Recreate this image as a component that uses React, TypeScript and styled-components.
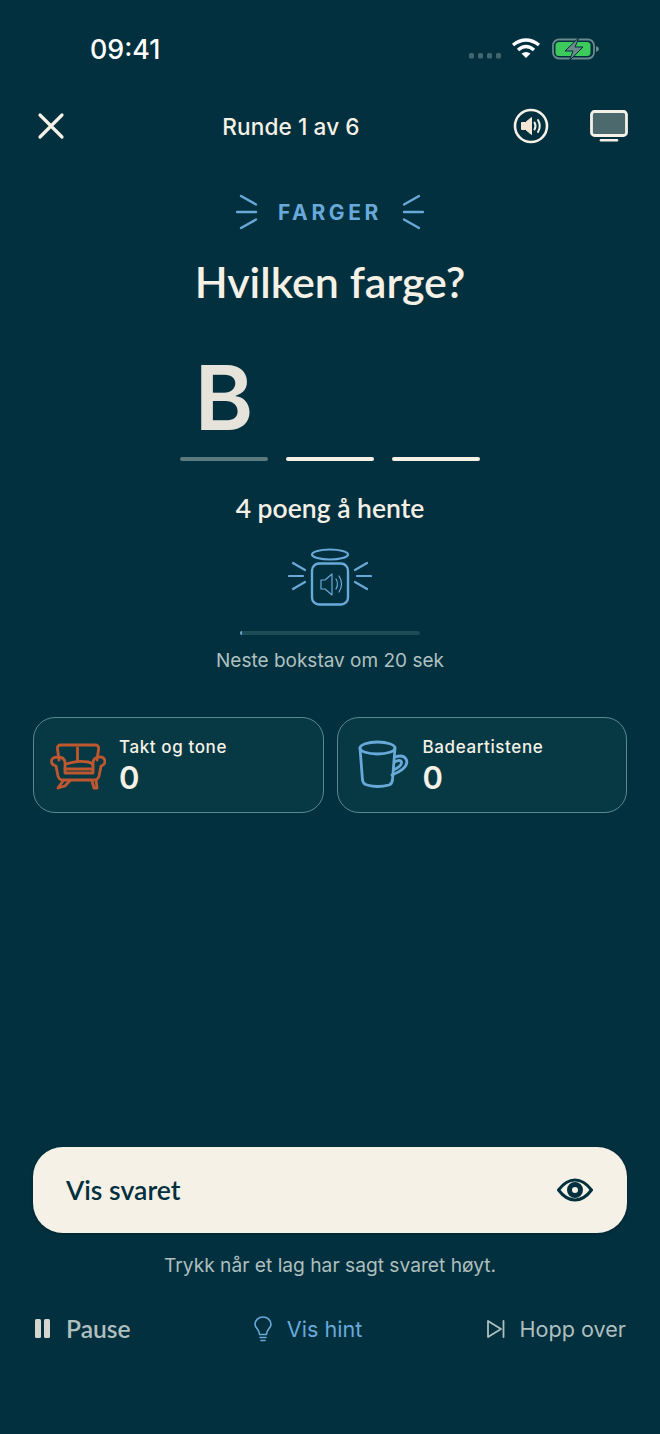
import React from 'react';
import styled, { createGlobalStyle } from 'styled-components';

const Global = createGlobalStyle`
  html, body { margin: 0; padding: 0; background: #02303e; }
  * { box-sizing: border-box; }
`;

const Screen = styled.div`
  width: 660px;
  height: 1434px;
  background: #02303e;
  color: #f5f1e6;
  font-family: Inter, "Liberation Sans", sans-serif;
  display: flex;
  flex-direction: column;
  overflow: hidden;
`;

const StatusBar = styled.div`
  height: 97px;
  padding: 31px 60px 0 90px;
  display: flex;
  justify-content: space-between;
  align-items: flex-start;
`;

const Time = styled.span`
  font-size: 26.8px;
  line-height: 36px;
  font-weight: 500;
  color: #fff;
`;

const StatusIcons = styled.div`
  display: flex;
  align-items: center;
  height: 36px;
  gap: 10px;
`;

const TopBar = styled.div`
  height: 58px;
  padding: 0 32px 0 37px;
  display: flex;
  align-items: center;
`;

const RoundLabel = styled.div`
  margin-left: 148px;
  width: 156px;
  text-align: center;
  font-size: 22.6px;
  font-weight: 500;
  letter-spacing: 0.1px;
`;

const TopActions = styled.div`
  margin-left: auto;
  display: flex;
  align-items: center;
  gap: 41px;
`;

const Center = styled.div`
  display: flex;
  flex-direction: column;
  align-items: center;
`;

const Category = styled.div`
  margin-top: 39px;
  height: 36px;
  display: flex;
  align-items: center;
  gap: 20px;
`;

const CategoryName = styled.span`
  font-size: 21px;
  font-weight: 700;
  letter-spacing: 3.6px;
  color: #69a9da;
  font-family: Inter, sans-serif;
`;

const Question = styled.h1`
  margin: 26px 0 0;
  font-family: Lato, sans-serif;
  font-size: 43px;
  line-height: 52px;
  font-weight: 600;
  color: #f5f1e6;
`;

const Letters = styled.div`
  margin-top: 50px;
  display: flex;
  gap: 18px;
`;

const LetterSlot = styled.div`
  width: 88px;
  height: 103px;
  display: flex;
  flex-direction: column;
  justify-content: flex-end;
  align-items: center;
`;

const Letter = styled.span`
  font-family: Inter, sans-serif;
  font-size: 89px;
  line-height: 80px;
  font-weight: 600;
  color: #e6e3da;
  margin-bottom: 19px;
`;

const Dash = styled.div<{ $dim?: boolean }>`
  width: 88px;
  height: 4px;
  flex: none;
  border-radius: 2px;
  background: ${p => (p.$dim ? '#5b7a7d' : '#f5f1e6')};
`;

const Points = styled.div`
  margin-top: 31px;
  font-size: 26.5px;
  line-height: 32px;
  font-weight: 600;
  font-family: Lato, sans-serif;
  color: #f5f1e6;
`;

const SpeakerWrap = styled.div`
  margin-top: 24px;
  height: 60px;
  display: flex;
`;

const Progress = styled.div`
  margin-top: 23px;
  width: 180px;
  height: 4px;
  border-radius: 2px;
  background: #1f4b55;
  overflow: hidden;
`;

const ProgressFill = styled.div`
  height: 100%;
  background: #69a9da;
`;

const NextLetter = styled.div`
  margin-top: 13px;
  font-size: 19px;
  line-height: 26px;
  color: #afc0c0;
`;

const Teams = styled.div`
  margin-top: 43px;
  padding: 0 33px;
  display: grid;
  grid-template-columns: 1fr 1fr;
  gap: 13px;
`;

const TeamCard = styled.div`
  height: 96px;
  border: 1.5px solid #5a8a8f;
  border-radius: 22px;
  background: #073945;
  display: flex;
  align-items: center;
  padding-left: 16px;
  gap: 13px;
`;

const TeamIcon = styled.div`
  width: 56px;
  height: 56px;
  flex: none;
`;

const TeamText = styled.div`
  display: flex;
  flex-direction: column;
`;

const TeamName = styled.span`
  font-size: 17px;
  line-height: 24px;
  font-weight: 500;
  letter-spacing: 0.6px;
  color: #f5f1e6;
`;

const TeamScore = styled.span`
  margin-top: 1px;
  font-size: 31px;
  line-height: 36px;
  font-weight: 600;
  color: #f5f1e6;
`;

const Spacer = styled.div`
  flex: 1;
`;

const RevealButton = styled.div`
  margin: 0 33px;
  height: 86px;
  border-radius: 30px;
  background: #f5f1e6;
  color: #02303e;
  display: flex;
  align-items: center;
  justify-content: space-between;
  padding: 0 34px 0 33px;
  font-size: 26.6px;
  font-weight: 600;
  font-family: Lato, sans-serif;
  box-shadow: 0 1px 3px rgba(0, 0, 0, 0.25);
`;

const Helper = styled.div`
  margin-top: 19px;
  text-align: center;
  font-size: 19.2px;
  line-height: 26px;
  color: #aebfbe;
`;

const BottomBar = styled.div`
  margin-top: 35px;
  margin-bottom: 89px;
  padding: 0 34px 0 34px;
  height: 32px;
  display: flex;
  justify-content: space-between;
  align-items: center;
`;

const BottomAction = styled.div<{ $accent?: boolean; $muted?: boolean }>`
  display: flex;
  align-items: center;
  gap: ${p => (p.$accent ? '15px' : p.$muted ? '14px' : '15px')};
  font-size: ${p => (p.$accent || p.$muted ? '21.6px' : '24.6px')};
  line-height: 30px;
  font-weight: ${p => (p.$accent || p.$muted ? 400 : 600)};
  color: ${p => (p.$accent ? '#69a9da' : '#aebfbe')};
  font-family: ${p => (p.$muted || p.$accent ? 'Inter' : 'Lato')}, sans-serif;
`;

const Rays = ({ flip }: { flip?: boolean }) => (
  <svg width="22" height="36" viewBox="0 0 22 36" fill="none" stroke="#69a9da" strokeWidth="2.4" strokeLinecap="round"
    style={flip ? { transform: 'scaleX(-1)' } : undefined}>
    <path d="M5 2 L20 10.5" />
    <path d="M1 18 L20 18" />
    <path d="M5 34 L20 25.5" />
  </svg>
);

const Speaker = () => (
  <svg width="84" height="60" viewBox="0 0 84 60" fill="none" stroke="#69a9da" strokeLinecap="round" strokeLinejoin="round">
    <ellipse cx="42" cy="6.5" rx="18" ry="5" strokeWidth="2.2" />
    <rect x="24" y="15.5" width="36" height="41" rx="7" strokeWidth="2.4" />
    <path d="M33 32 h4 l7 -6 v21 l-7 -6 h-4 z" strokeWidth="1.2" />
    <path d="M48 31 q3 5 0 10 M51 28 q5 8 0 16" strokeWidth="1.2" />
    <path d="M5 15 L17 22 M1 28 L15 28 M5 41 L17 34" strokeWidth="2.2" />
    <path d="M79 15 L67 22 M83 28 L69 28 M79 41 L67 34" strokeWidth="2.2" />
  </svg>
);

const Sofa = () => (
  <svg width="56" height="56" viewBox="0 -1 56 56" fill="none" stroke="#c0582f" strokeWidth="2.8" strokeLinecap="round" strokeLinejoin="round">
    <path d="M9 22 L7.5 11 Q7 7 11 7 H45 Q49 7 48.6 11 L47 22" />
    <path d="M27.5 10 V23" />
    <path d="M16 26 Q27 22 38 24 Q43 25 43 28" />
    <path d="M15 31 H43" />
    <path d="M15 24 Q14 19 8 19 Q1 19 1.5 24 Q2 27 6 28 L8 38 Q9 42 13 42 H44 Q48 42 49 38 L51 28 Q55 27 55 23 Q54 18 48 19 Q43 20 43 25 V35 H15 Z" />
    <path d="M13 43 L8 50 L15 48 L20 42.5" />
    <path d="M42 43 L44 50 H47 L46 42" />
  </svg>
);

const Mug = () => (
  <svg width="56" height="56" viewBox="-2 -3 56 56" fill="none" stroke="#69a9da" strokeWidth="2.8" strokeLinecap="round" strokeLinejoin="round">
    <ellipse cx="21.5" cy="8" rx="17.5" ry="6" />
    <path d="M4 8 L6.5 40 Q7 44 11 45 Q21.5 48 33 45 Q36 44 36.5 40 L39 8" />
    <path d="M39 17 Q48 14 50.5 20 Q53 28 36 35" />
    <path d="M38.5 22 Q44 19 45.5 22 Q46 26 37.5 30" />
  </svg>
);

export default function App() {
  return (
    <Screen>
      <Global />
      <StatusBar>
        <Time>09:41</Time>
        <StatusIcons>
          <svg width="34" height="8" viewBox="0 0 34 8" fill="#436570" style={{ marginTop: 14, marginRight: -2 }}>
            <rect x="0" y="1" width="5" height="5.5" rx="1.5" />
            <rect x="9" y="1" width="5" height="5.5" rx="1.5" />
            <rect x="18" y="1" width="5" height="5.5" rx="1.5" />
            <rect x="27" y="1" width="5" height="5.5" rx="1.5" />
          </svg>
          <svg width="30" height="22" viewBox="0 0 30 22" fill="none" stroke="#fff" strokeWidth="3.4" strokeLinecap="butt" style={{ marginTop: -2 }}>
            <path d="M2 8 Q15 -2 28 8" />
            <path d="M7 13 Q15 6 23 13" />
            <path d="M15 21 L10.5 16.6 Q15 13.4 19.5 16.6 Z" fill="#fff" stroke="none" />
          </svg>
          <svg width="48" height="24" viewBox="0 0 48 24" fill="none" style={{ marginLeft: 1, marginTop: -1 }}>
            <rect x="1" y="2.5" width="41" height="19" rx="6" stroke="#6b8a8c" strokeWidth="1.8" />
            <rect x="3.5" y="5" width="35" height="14" rx="3.5" fill="#3ec95c" />
            <path d="M44 9 Q47 10 47 12 Q47 14 44 15 Z" fill="#6b8a8c" />
            <path d="M27 0.5 L13 14 H21 L17.5 23.5 L31 10 H23 Z" fill="#6b8a8c" stroke="#02303e" strokeWidth="1" />
          </svg>
        </StatusIcons>
      </StatusBar>

      <TopBar>
        <svg width="28" height="28" viewBox="0 0 28 28" fill="none" stroke="#f5f1e6" strokeWidth="3.2" strokeLinecap="round">
          <path d="M3 3 L25 25 M25 3 L3 25" />
        </svg>
        <RoundLabel>Runde 1 av 6</RoundLabel>
        <TopActions>
          <svg width="36" height="36" viewBox="0 0 36 36" fill="none">
            <circle cx="18" cy="18" r="16" stroke="#f5f1e6" strokeWidth="2.6" />
            <path d="M8.5 14.5 h4 l6 -5 v17 l-6 -5 h-4 z" fill="#f5e6d5" stroke="#f5e6d5" strokeWidth="1" strokeLinejoin="round" />
            <path d="M21.5 14.5 q2 3.5 0 7 M25 12 q3.5 6 0 12" stroke="#f5f1e6" strokeWidth="2" strokeLinecap="round" />
          </svg>
          <svg width="38" height="32" viewBox="0 0 38 32" fill="none">
            <rect x="1.5" y="1.5" width="35" height="24" rx="3" fill="#4c6a6e" stroke="#f5f1e6" strokeWidth="2.8" />
            <path d="M11 30.2 H27" stroke="#f5f1e6" strokeWidth="2.6" strokeLinecap="round" />
          </svg>
        </TopActions>
      </TopBar>

      <Center>
        <Category>
          <Rays />
          <CategoryName>FARGER</CategoryName>
          <Rays flip />
        </Category>
        <Question>Hvilken farge?</Question>
        <Letters>
          <LetterSlot>
            <Letter>B</Letter>
            <Dash $dim />
          </LetterSlot>
          <LetterSlot>
            <Dash />
          </LetterSlot>
          <LetterSlot>
            <Dash />
          </LetterSlot>
        </Letters>
        <Points>4 poeng å hente</Points>
        <SpeakerWrap>
          <Speaker />
        </SpeakerWrap>
        <Progress>
          <ProgressFill style={{ width: `${(1 / 90) * 100}%` }} />
        </Progress>
        <NextLetter>Neste bokstav om 20 sek</NextLetter>
      </Center>

      <Teams>
        <TeamCard>
          <TeamIcon><Sofa /></TeamIcon>
          <TeamText>
            <TeamName>Takt og tone</TeamName>
            <TeamScore>0</TeamScore>
          </TeamText>
        </TeamCard>
        <TeamCard>
          <TeamIcon><Mug /></TeamIcon>
          <TeamText>
            <TeamName>Badeartistene</TeamName>
            <TeamScore>0</TeamScore>
          </TeamText>
        </TeamCard>
      </Teams>

      <Spacer />

      <RevealButton>
        Vis svaret
        <svg width="36" height="24" viewBox="0 0 36 24" fill="none">
          <path d="M1.5 12 Q9 2 18 2 Q27 2 34.5 12 Q27 22 18 22 Q9 22 1.5 12 Z" stroke="#02303e" strokeWidth="3" strokeLinejoin="round" />
          <circle cx="18" cy="12" r="5.5" stroke="#02303e" strokeWidth="5" />
        </svg>
      </RevealButton>
      <Helper>Trykk når et lag har sagt svaret høyt.</Helper>

      <BottomBar>
        <BottomAction>
          <svg width="17" height="20" viewBox="0 0 17 20" fill="#d4d6cf">
            <rect x="1" y="0" width="6" height="19" rx="1.5" />
            <rect x="10" y="0" width="6" height="19" rx="1.5" />
          </svg>
          Pause
        </BottomAction>
        <BottomAction $accent>
          <svg width="18" height="26" viewBox="0 0 18 26" fill="none" stroke="#69a9da" strokeWidth="1.6" strokeLinecap="round" strokeLinejoin="round">
            <path d="M5.5 18.5 Q5.5 15.5 3 12.5 Q1 10 1 8.5 A8 7.5 0 0 1 17 8.5 Q17 10 15 12.5 Q12.5 15.5 12.5 18.5 Z" />
            <path d="M6 21.5 H12 M7 24.5 H11" />
          </svg>
          Vis hint
        </BottomAction>
        <BottomAction $muted>
          <svg width="20" height="20" viewBox="0 0 20 20" fill="none" stroke="#aebfbe" strokeWidth="1.8" strokeLinejoin="round" strokeLinecap="round">
            <path d="M2 2 L15 10 L2 18 Z" />
            <path d="M17.5 2 V18" />
          </svg>
          Hopp over
        </BottomAction>
      </BottomBar>
    </Screen>
  );
}
